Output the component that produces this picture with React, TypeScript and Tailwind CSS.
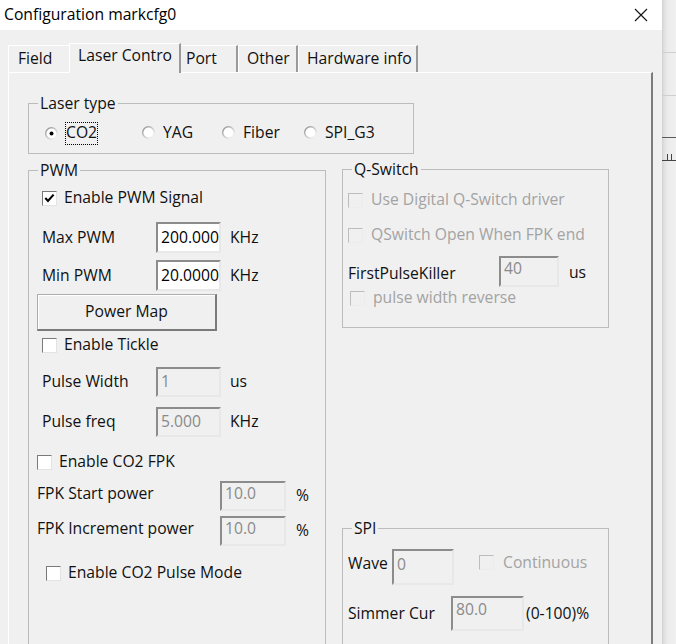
import React from "react";

function Check({ checked = false, disabled = false }: { checked?: boolean; disabled?: boolean }) {
  return (
    <div
      className={
        disabled
          ? "w-[15px] h-[15px] shrink-0 border border-t-[#bdbdbd] border-l-[#bdbdbd] border-r-[#ececec] border-b-[#ececec] bg-[#f0f0f0]"
          : "w-[15px] h-[15px] shrink-0 border border-t-[#7a7a7a] border-l-[#7a7a7a] border-r-[#e3e3e3] border-b-[#e3e3e3] bg-white"
      }
    >
      {checked && (
        <svg width="13" height="13" viewBox="0 0 13 13">
          <path d="M2.3 6 L5 9 L10.6 2.6" stroke="#000" strokeWidth="2.1" fill="none" />
        </svg>
      )}
    </div>
  );
}

function Radio({ checked = false }: { checked?: boolean }) {
  return (
    <svg width="13" height="13" viewBox="0 0 13 13" className="shrink-0">
      <defs>
        <linearGradient id="rg" x1="0" y1="0" x2="1" y2="1">
          <stop offset="0" stopColor="#8a8a8a" />
          <stop offset="0.5" stopColor="#c8c8c8" />
          <stop offset="1" stopColor="#ffffff" />
        </linearGradient>
      </defs>
      <circle cx="6.5" cy="6.5" r="5.8" fill="#fff" stroke="url(#rg)" strokeWidth="1.4" />
      {checked && <circle cx="6.5" cy="6.5" r="2" fill="#000" />}
    </svg>
  );
}

function Edit({
  value,
  disabled = false,
  cls,
}: {
  value: string;
  disabled?: boolean;
  cls: string;
}) {
  return (
    <div
      className={
        (disabled
          ? "bg-[#f0f0f0] text-[#8a8a8a] "
          : "bg-white text-black ") +
        "shrink-0 border-2 border-t-[#8c8c8c] border-l-[#8c8c8c] border-r-[#e8e8e8] border-b-[#e8e8e8] flex pl-[3px] overflow-hidden whitespace-nowrap " +
        cls
      }
    >
      {value}
    </div>
  );
}

function Tabs() {
  return (
    <div className="flex items-end h-[29px]">
      <div className="w-[61px] h-[27px] border-t border-l border-t-white border-l-white flex items-center pl-[9px] pb-[1px]">
        Field
      </div>
      <div className="relative z-10 -mb-px w-[112px] h-[30px] bg-[#f0f0f0] border-t border-l border-r-2 border-t-white border-l-white border-r-[#9a9a9a] flex items-center pl-[8px] pb-[5px]">
        Laser Contro
      </div>
      <div className="w-[57px] h-[27px] border-t border-r-2 border-t-white border-r-[#9a9a9a] flex items-center pl-[5px] pb-[1px]">
        Port
      </div>
      <div className="w-[60px] h-[27px] border-t border-l border-r-2 border-t-white border-l-white border-r-[#9a9a9a] flex items-center pl-[8px] pb-[1px]">
        Other
      </div>
      <div className="w-[120px] h-[27px] border-t border-l border-r-2 border-t-white border-l-white border-r-[#9a9a9a] flex items-center pl-[8px] pb-[1px]">
        Hardware info
      </div>
    </div>
  );
}

function LaserType() {
  return (
    <fieldset className="w-[386px] h-[61px] border border-[#bcbcbc]">
      <legend className="ml-[9px] px-[2px] h-[20px] leading-[20px]">Laser type</legend>
      <div className="mt-[10px] h-[20px] flex items-center pl-[16px]">
        <div className="w-[97px] flex items-center">
          <Radio checked />
          <span className="ml-[7px] h-[23px] border border-dotted border-black flex items-center px-0">CO2</span>
        </div>
        <div className="w-[80px] flex items-center">
          <Radio />
          <span className="ml-[8px]">YAG</span>
        </div>
        <div className="w-[82px] flex items-center">
          <Radio />
          <span className="ml-[8px]">Fiber</span>
        </div>
        <div className="flex items-center">
          <Radio />
          <span className="ml-[8px]">SPI_G3</span>
        </div>
      </div>
    </fieldset>
  );
}

function PWM() {
  return (
    <fieldset className="mt-[6px] w-[298px] h-[520px] border border-[#bcbcbc] shrink-0">
      <legend className="ml-[9px] px-[2px] h-[20px] leading-[20px]">PWM</legend>
      <div className="mt-[8px] h-[20px] flex items-center pl-[13px]">
        <Check checked />
        <span className="ml-[7px]">Enable PWM Signal</span>
      </div>
      <div className="mt-[14px] h-[31px] flex items-center pl-[13px]">
        <span className="w-[114px]">Max PWM</span>
        <Edit value="200.000" cls="w-[65px] h-[31px] items-center" />
        <span className="ml-[9px]">KHz</span>
      </div>
      <div className="mt-[7px] h-[31px] flex items-center pl-[13px]">
        <span className="w-[114px]">Min PWM</span>
        <Edit value="20.0000" cls="w-[65px] h-[31px] items-center" />
        <span className="ml-[9px]">KHz</span>
      </div>
      <div className="mt-[3px] pl-[8px]">
        <div className="w-[180px] h-[37px] bg-[#f0f0f0] border border-[#adadad] border-b-2 border-r-2 border-b-[#7a7a7a] border-r-[#7a7a7a] shadow-[inset_1px_1px_0_#ffffff] flex items-center justify-center">
          Power Map
        </div>
      </div>
      <div className="mt-[4px] h-[20px] flex items-center pl-[13px]">
        <Check />
        <span className="ml-[7px]">Enable Tickle</span>
      </div>
      <div className="mt-[12px] h-[30px] flex items-center pl-[13px]">
        <span className="w-[114px]">Pulse Width</span>
        <Edit value="1" disabled cls="w-[65px] h-[30px] items-center" />
        <span className="ml-[9px]">us</span>
      </div>
      <div className="mt-[10px] h-[30px] flex items-center pl-[13px]">
        <span className="w-[114px]">Pulse freq</span>
        <Edit value="5.000" disabled cls="w-[65px] h-[30px] items-center" />
        <span className="ml-[9px]">KHz</span>
      </div>
      <div className="mt-[15px] h-[20px] flex items-center pl-[8px]">
        <Check />
        <span className="ml-[7px]">Enable CO2 FPK</span>
      </div>
      <div className="mt-[9px] h-[30px] flex items-center pl-[8px]">
        <span className="w-[183px] pb-[5px]">FPK Start power</span>
        <Edit value="10.0" disabled cls="w-[66px] h-[30px] items-center pb-[4px]" />
        <span className="ml-[10px]">%</span>
      </div>
      <div className="mt-[5px] h-[30px] flex items-center pl-[8px]">
        <span className="w-[183px] pb-[5px]">FPK Increment power</span>
        <Edit value="10.0" disabled cls="w-[66px] h-[30px] items-center pb-[4px]" />
        <span className="ml-[10px]">%</span>
      </div>
      <div className="mt-[17px] h-[20px] flex items-center pl-[17px]">
        <Check />
        <span className="ml-[7px]">Enable CO2 Pulse Mode</span>
      </div>
    </fieldset>
  );
}

function QSwitch() {
  return (
    <fieldset className="mt-[5px] w-[267px] h-[169px] border border-[#bcbcbc]">
      <legend className="ml-[9px] px-[2px] h-[20px] leading-[20px]">Q-Switch</legend>
      <div className="mt-[11px] h-[20px] flex items-center pl-[5px] text-[#a3a3a3]">
        <Check disabled />
        <span className="ml-[8px]">Use Digital Q-Switch driver</span>
      </div>
      <div className="mt-[15px] h-[20px] flex items-center pl-[5px] text-[#a3a3a3]">
        <Check disabled />
        <span className="ml-[8px]">QSwitch Open When FPK end</span>
      </div>
      <div className="mt-[11px] h-[31px] flex items-center pl-[5px]">
        <span className="w-[151px] pt-[4px]">FirstPulseKiller</span>
        <Edit value="40" disabled cls="w-[60px] h-[31px] items-center pb-[5px]" />
        <span className="ml-[10px] pt-[3px]">us</span>
      </div>
      <div className="mt-[1px] h-[20px] flex items-center pl-[7px] text-[#a3a3a3]">
        <Check disabled />
        <span className="ml-[8px]">pulse width reverse</span>
      </div>
    </fieldset>
  );
}

function SPI() {
  return (
    <fieldset className="mt-[190px] w-[267px] h-[200px] border border-[#bcbcbc]">
      <legend className="ml-[9px] px-[2px] h-[20px] leading-[20px]">SPI</legend>
      <div className="mt-[11px] h-[36px] flex items-start pl-[5px]">
        <span className="w-[44px] h-[28px] leading-[28px] overflow-hidden whitespace-nowrap">Wave</span>
        <Edit value="0" disabled cls="w-[62px] h-[36px] items-start pt-[6px]" />
        <div className="ml-[25px] mt-[6px] flex items-center text-[#a3a3a3]">
          <Check disabled />
          <span className="ml-[9px]">Continuous</span>
        </div>
      </div>
      <div className="mt-[11px] h-[35px] flex items-center pl-[5px]">
        <span className="w-[103px]">Simmer Cur</span>
        <Edit value="80.0" disabled cls="w-[73px] h-[35px] items-start pt-[4px]" />
        <span className="ml-[2px]">(0-100)%</span>
      </div>
    </fieldset>
  );
}

function RightStrip() {
  return (
    <div className="w-[14px] h-[644px] shrink-0 bg-[linear-gradient(to_right,#d2d2d2,#e4e4e4_3px,#ececec_6px,#f0f0f0)] flex flex-col">
      <div className="h-[52px] shrink-0" />
      <div className="h-[1px] bg-[#cfcfcf] shrink-0" />
      <div className="h-[42px] shrink-0" />
      <div className="h-[1px] bg-[#cfcfcf] shrink-0" />
      <div className="h-[41px] shrink-0" />
      <div className="h-[1px] bg-[#5a5a5a] shrink-0" />
      <div className="h-[16px] shrink-0" />
      <div className="h-[6px] shrink-0 flex pl-[5px] gap-[4px]">
        <div className="w-px h-full bg-[#444]" />
        <div className="w-px h-full bg-[#444]" />
        <div className="w-px h-full bg-[#444]" />
      </div>
      <div className="h-[1px] bg-[#444] shrink-0" />
    </div>
  );
}

export default function App() {
  return (
    <div className="w-[676px] h-[644px] overflow-hidden flex bg-[#f0f0f0] text-[15.7px] leading-none text-[#111] font-['Open_Sans',sans-serif]">
      <div className="w-[662px] h-[644px] flex flex-col shrink-0">
        <div className="h-[30px] bg-white flex items-center pl-[4px] shrink-0">
          <span className="text-[15.7px] text-black">Configuration markcfg0</span>
          <svg width="14" height="14" viewBox="0 0 14 14" className="ml-auto mr-[14px]">
            <path d="M1 1 L13 13 M13 1 L1 13" stroke="#111" strokeWidth="1.1" />
          </svg>
        </div>
        <div className="flex-1 min-h-0 bg-[#f0f0f0] pl-[8px] pr-[9px] pt-[13px] flex flex-col">
          <Tabs />
          <div className="flex-1 min-h-0 overflow-hidden border-t border-l border-r-2 border-t-white border-l-white border-r-[#7c7c7c] pl-[19px] pt-[20px]">
            <LaserType />
            <div className="flex items-start">
              <PWM />
              <div className="ml-[16px] flex flex-col">
                <QSwitch />
                <SPI />
              </div>
            </div>
          </div>
        </div>
      </div>
      <RightStrip />
    </div>
  );
}
